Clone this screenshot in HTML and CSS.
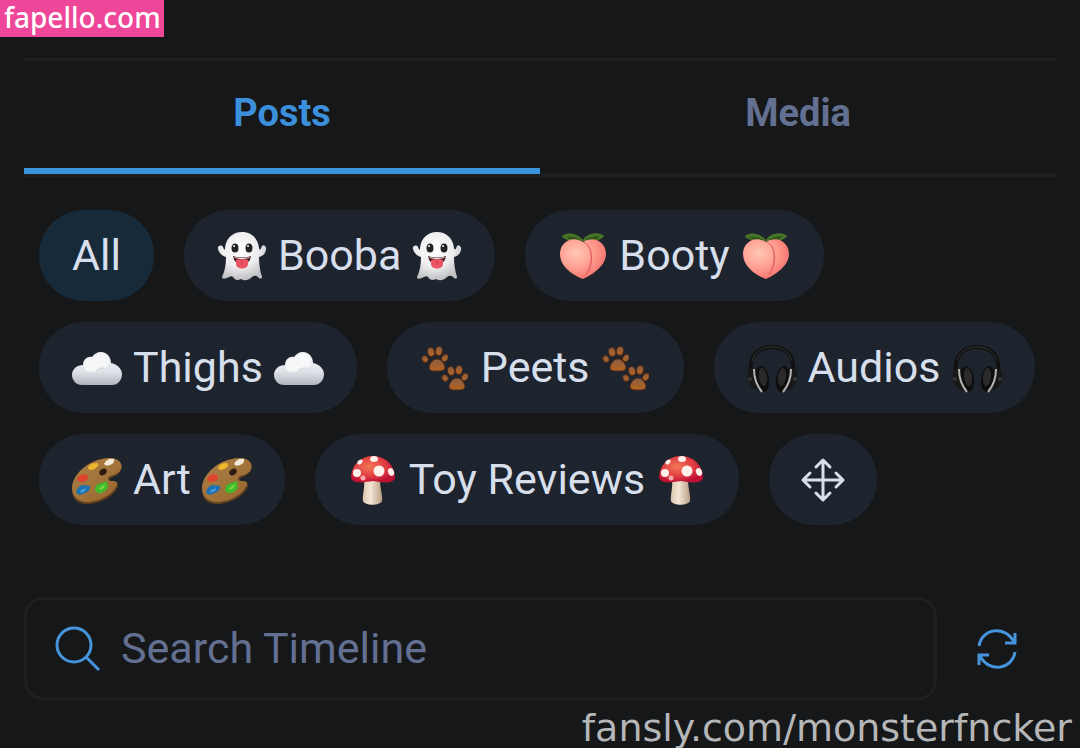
FILE: index.html
```html
<!DOCTYPE html>
<html lang="en">
<head>
    <meta charset="UTF-8">
    <meta name="viewport" content="width=device-width, initial-scale=1.0">
    <title>Timeline</title>
    <link rel="stylesheet" href="styles.css">
</head>
<body>
    <!-- Shared emoji drawings -->
    <svg class="sprites" aria-hidden="true">
        <defs>
            <radialGradient id="ghost-fill" cx="45%" cy="35%" r="65%">
                <stop offset="0" stop-color="#ffffff"/>
                <stop offset="0.6" stop-color="#ececee"/>
                <stop offset="1" stop-color="#bfc0c2"/>
            </radialGradient>
            <radialGradient id="peach-fill" cx="35%" cy="35%" r="70%">
                <stop offset="0" stop-color="#ffc8b4"/>
                <stop offset="0.55" stop-color="#ff9e90"/>
                <stop offset="1" stop-color="#f3706c"/>
            </radialGradient>
            <linearGradient id="cloud-fill" x1="0" y1="0" x2="0" y2="1">
                <stop offset="0" stop-color="#f2f3f5"/>
                <stop offset="0.6" stop-color="#dfe2e7"/>
                <stop offset="1" stop-color="#aeb4bf"/>
            </linearGradient>
            <linearGradient id="paw-fill" x1="0" y1="0" x2="0" y2="1">
                <stop offset="0" stop-color="#8a5d42"/>
                <stop offset="1" stop-color="#b5641f"/>
            </linearGradient>
            <linearGradient id="palette-fill" x1="0" y1="0" x2="1" y2="1">
                <stop offset="0" stop-color="#ae8148"/>
                <stop offset="1" stop-color="#96652c"/>
            </linearGradient>
            <radialGradient id="cap-fill" cx="42%" cy="40%" r="60%">
                <stop offset="0" stop-color="#f17758"/>
                <stop offset="0.6" stop-color="#e23e43"/>
                <stop offset="1" stop-color="#bd1032"/>
            </radialGradient>
            <linearGradient id="stem-fill" x1="0" y1="0" x2="1" y2="0">
                <stop offset="0" stop-color="#d9c5ac"/>
                <stop offset="0.4" stop-color="#f4e7d6"/>
                <stop offset="1" stop-color="#b89d81"/>
            </linearGradient>
        </defs>

        <symbol id="ghost" viewBox="0 0 50 50">
            <path fill="url(#ghost-fill)" d="M25 1C34 1 41 7 42 17C43 20 44 18 45 15C46 13 50 15 49 19C48 23 46 25 42 26C42 33 43 40 45 46C45 48 43 48 41 46C39 44 37 45 35 46C31 50 27 50 24 48C20 50 18 49 16 46C14 44 12 46 10 47C7 48 5 48 5 46C8 40 9 33 9 26C5 25 2 22 1 18C0 15 4 13 6 16C7 19 8 20 8 17C9 7 16 1 25 1Z"/>
            <ellipse cx="18" cy="17" rx="3.5" ry="4.5" fill="#26221f"/>
            <ellipse cx="32" cy="17" rx="3.5" ry="4.5" fill="#26221f"/>
            <circle cx="17" cy="15" r="1" fill="#fff"/>
            <circle cx="31" cy="15" r="1" fill="#fff"/>
            <path fill="#4b2023" d="M16 25Q25 28 34 25Q33 33 25 33Q17 33 16 25Z"/>
            <path fill="#f3e9e8" d="M17 26Q25 28 33 26L32 27Q25 29 18 27Z"/>
            <path fill="#ed5565" d="M19 29Q25 27 31 29V33C31 39 19 39 19 33Z"/>
            <path stroke="#c63d50" d="M25 29V34"/>
        </symbol>

        <symbol id="peach" viewBox="0 0 50 50">
            <path fill="#477426" d="M25 10C19 11 9 10 4 6C5 2 17 0 25 9C30 1 42 1 46 5C43 10 32 11 25 10Z"/>
            <path fill="#2c5319" d="M8 6Q17 5 24 10L16 10ZM28 9Q33 5 42 5L36 10Z"/>
            <path fill="url(#peach-fill)" d="M25 11C14 4 2 11 2 23C2 35 14 44 25 48C36 43 48 34 48 23C48 11 36 4 25 11Z"/>
            <path fill="#f0706b" opacity=".6" d="M27 11C35 14 34 36 25 48C36 40 38 16 27 11Z"/>
            <path fill="none" stroke="#dc5c5b" d="M26 11C36 17 35 36 28 43"/>
        </symbol>

        <symbol id="cloud" viewBox="0 0 50 50">
            <path fill="url(#cloud-fill)" d="M10 42C4 42 0 37 0 32C0 26 5 22 11 22C11 16 16 13 20 14C22 11 25 9 29 9C35 9 39 14 39 20C45 21 50 26 50 31C50 37 46 42 40 42Z"/>
            <path fill="#f6f7f8" d="M12 25C11 18 16 14 21 16C24 9 36 9 37 19C37 25 31 25 27 26C22 30 14 30 12 25Z"/>
            <path fill="none" stroke="#cdd0d6" d="M24 28Q27 24 32 25"/>
        </symbol>

        <symbol id="paw" viewBox="0 0 27 26">
            <g fill="url(#paw-fill)" stroke="#4d2b18">
                <path d="M8 21C9 17 12 13 16 13C20 13 23 17 24 21C24 25 21 25 16 25C11 25 8 25 8 21Z"/>
                <ellipse cx="4" cy="13" rx="3" ry="3.5" transform="rotate(-30 4 13)"/>
                <ellipse cx="10" cy="6" rx="3.5" ry="4.5" transform="rotate(-15 10 6)"/>
                <ellipse cx="18" cy="5" rx="3.5" ry="4.5" transform="rotate(10 18 5)"/>
                <ellipse cx="24" cy="12" rx="3" ry="4" transform="rotate(35 24 12)"/>
            </g>
        </symbol>

        <symbol id="paws" viewBox="0 0 50 50">
            <use href="#paw" x="1" y="3" width="27" height="26"/>
            <use href="#paw" x="21" y="22" width="27" height="26"/>
        </symbol>

        <symbol id="headphones" viewBox="0 0 50 50">
            <path fill="none" stroke="#101010" stroke-width="4" d="M4 29C2 13 11 4 25 4C39 4 48 13 46 29"/>
            <path fill="none" stroke="#343434" d="M5 18C8 8 15 4 25 4C35 4 42 8 45 18"/>
            <g id="ear-cup">
                <ellipse cx="7" cy="36" rx="6" ry="11" fill="#181818" transform="rotate(-15 7 36)"/>
                <ellipse cx="15" cy="36" rx="7" ry="13" fill="#0e0e0e" transform="rotate(-8 15 36)"/>
                <ellipse cx="16" cy="34" rx="4" ry="9" fill="#2a2a2a" transform="rotate(-8 16 34)"/>
                <path fill="none" stroke="#b5b4b1" stroke-width="2" d="M7 26C7 35 10 43 15 49"/>
                <circle cx="3" cy="36" r="2" fill="#343434"/>
            </g>
            <use href="#ear-cup" transform="matrix(-1 0 0 1 51 0)"/>
        </symbol>

        <symbol id="palette" viewBox="0 0 50 50">
            <path fill="#64401e" d="M0 35C0 18 18 3 38 3C48 3 53 11 47 18C44 22 37 22 38 25C39 28 46 25 46 30C45 39 29 49 15 49C6 49 0 44 0 35Z"/>
            <path fill="url(#palette-fill)" d="M0 33C1 17 20 3 38 3C48 3 53 11 47 17C43 21 36 20 36 24C36 28 46 24 45 29C43 38 28 47 15 47C6 47 0 41 0 33Z"/>
            <ellipse cx="31" cy="17" rx="4" ry="3" fill="#2b1b13" transform="rotate(-35 31 17)"/>
            <path fill="#f3ead9" d="M32 9Q35 3 42 4Q43 8 38 10Q34 12 32 9Z"/>
            <path fill="#edb52c" d="M16 13Q17 8 25 8Q28 10 24 13Q18 17 16 13Z"/>
            <path fill="#df452c" d="M5 25Q6 20 12 19Q18 20 15 25Q9 29 5 25Z"/>
            <path fill="#1d72b4" d="M4 38Q5 32 10 30L18 31Q19 34 15 37L8 40Z"/>
            <path fill="#4b9ed5" d="M9 35L14 33L13 36L8 38Z"/>
            <path fill="#42b82b" d="M23 35Q23 29 29 28L35 26L36 32Q35 36 29 38Q25 39 23 35Z"/>
            <path fill="#76d647" d="M27 33L33 29L32 33L28 35Z"/>
        </symbol>

        <symbol id="mushroom" viewBox="0 0 50 50">
            <path fill="url(#stem-fill)" d="M16 25H32C32 34 35 41 34 46C32 51 17 51 15 46C14 41 17 34 16 25Z"/>
            <path fill="url(#cap-fill)" d="M3 22C4 9 13 1 25 1C38 1 47 11 47 23C44 30 33 27 25 26C17 27 4 30 3 22Z"/>
            <g fill="#fff0ec">
                <ellipse cx="26" cy="4" rx="4" ry="3"/>
                <ellipse cx="12" cy="7" rx="3" ry="2" transform="rotate(-35 12 7)"/>
                <circle cx="31" cy="16" r="5.5"/>
                <circle cx="9" cy="18" r="4"/>
                <ellipse cx="43" cy="17" rx="3" ry="4" transform="rotate(-20 43 17)"/>
                <circle cx="15" cy="23" r="2.5" fill="#f6aaa9"/>
            </g>
        </symbol>
    </svg>

    <div class="site-badge">fapello.com</div>

    <main class="feed">
        <div class="tabs" role="tablist">
            <button class="tab active" role="tab" aria-selected="true">Posts</button>
            <button class="tab" role="tab" aria-selected="false">Media</button>
        </div>

        <div class="chips">
            <button class="chip selected">All</button>
            <button class="chip"><svg class="emoji"><use href="#ghost"/></svg>Booba<svg class="emoji"><use href="#ghost"/></svg></button>
            <button class="chip"><svg class="emoji"><use href="#peach"/></svg>Booty<svg class="emoji"><use href="#peach"/></svg></button>
            <button class="chip"><svg class="emoji"><use href="#cloud"/></svg>Thighs<svg class="emoji"><use href="#cloud"/></svg></button>
            <button class="chip"><svg class="emoji"><use href="#paws"/></svg>Peets<svg class="emoji"><use href="#paws"/></svg></button>
            <button class="chip"><svg class="emoji"><use href="#headphones"/></svg>Audios<svg class="emoji"><use href="#headphones"/></svg></button>
            <button class="chip"><svg class="emoji"><use href="#palette"/></svg>Art<svg class="emoji"><use href="#palette"/></svg></button>
            <button class="chip"><svg class="emoji"><use href="#mushroom"/></svg>Toy Reviews<svg class="emoji"><use href="#mushroom"/></svg></button>
            <button class="chip" aria-label="Reorder">
                <svg class="icon-move" viewBox="0 0 42 42">
                    <path d="M21 1V41M1 21H41M14 8L21 1L28 8M14 34L21 41L28 34M8 14L1 21L8 28M34 14L41 21L34 28"/>
                </svg>
            </button>
        </div>

        <div class="search-row">
            <label class="search-box">
                <svg class="icon-search" viewBox="0 0 44 44" aria-hidden="true">
                    <circle cx="18" cy="18" r="17"/>
                    <path d="M30 30L43 43"/>
                </svg>
                <input type="text" placeholder="Search Timeline" aria-label="Search Timeline">
            </label>
            <button class="refresh" aria-label="Refresh">
                <svg class="icon-refresh" viewBox="0 0 40 40">
                    <path d="M2 17C5 -1 28 -4 37 13M38 4V14H28M38 23C35 41 12 44 3 27M2 36V26H12"/>
                </svg>
            </button>
        </div>
    </main>

    <div class="profile-link">fansly.com/monsterfncker</div>
</body>
</html>
```
FILE: styles.css
```css
* {
    box-sizing: border-box;
}
body {
    margin: 0;
    min-height: 100vh;
    position: relative;
    background-color: #151719;
    color: #d7dfec;
    font-family: Roboto, sans-serif;
}
button {
    border: none;
    background: none;
    font-family: inherit;
    cursor: pointer;
}
.sprites {
    position: absolute;
    width: 0;
    height: 0;
}
.site-badge {
    position: absolute;
    top: 0;
    left: 0;
    padding: 0 3px 3px 4px;
    background-color: #ee4799;
    color: #fff;
    font: 500 28px/34px "Noto Sans", sans-serif;
}
.feed {
    padding: 58px 24px 48px;
}
.tabs {
    display: flex;
    border-top: 3px solid #1d1f21;
    border-bottom: 3px solid #1d1f21;
}
.tab {
    flex: 1;
    height: 113px;
    padding: 0 0 3px;
    border-bottom: 6px solid transparent;
    color: #637091;
    font-size: 38px;
    font-weight: 700;
}
.tab.active {
    color: #3c8fdb;
    border-bottom-color: #3c94df;
}
.chips {
    display: flex;
    flex-wrap: wrap;
    gap: 21px 30px;
    padding: 33px 0 0 15px;
}
.chip {
    display: flex;
    align-items: center;
    gap: 11px;
    padding: 20px 33px;
    border-radius: 45px;
    background-color: #1e242e;
    color: #d7dfec;
    font-size: 43px;
    line-height: 51px;
    white-space: nowrap;
}
.chip.selected {
    background-color: #172a39;
}
.emoji {
    width: 50px;
    height: 50px;
}
.icon-move, .icon-search, .icon-refresh {
    flex: none;
    overflow: visible;
    fill: none;
    stroke-width: 3;
}
.icon-move {
    width: 42px;
    height: 42px;
    stroke: #d7dfec;
    stroke-linecap: round;
    stroke-linejoin: round;
}
.icon-search {
    width: 44px;
    height: 44px;
    stroke: #4694dc;
}
.icon-refresh {
    width: 40px;
    height: 40px;
    stroke: #4694dc;
}
.search-row {
    display: flex;
    align-items: center;
    margin-top: 72px;
}
.search-box {
    flex: 1;
    display: flex;
    align-items: center;
    gap: 21px;
    min-width: 0;
    height: 103px;
    padding: 0 29px;
    border: 3px solid #1d1f21;
    border-radius: 19px;
}
.search-box input {
    flex: 1;
    min-width: 0;
    padding: 0;
    border: none;
    outline: none;
    background: none;
    color: #d7dfec;
    font: 43px/51px Roboto, sans-serif;
}
.search-box input::placeholder {
    color: #637091;
    opacity: 1;
}
.refresh {
    display: flex;
    padding: 20px 39px 20px 40px;
}
.profile-link {
    position: absolute;
    right: 8px;
    bottom: 0;
    color: #b5b6b7;
    font: 38px/40px "DejaVu Sans", sans-serif;
}
```
